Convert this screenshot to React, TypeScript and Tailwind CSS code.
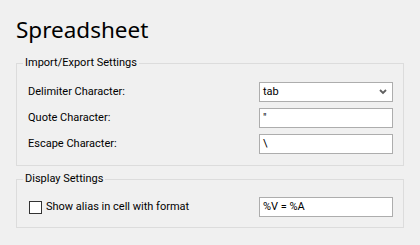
import React from "react";

function Field({ children }: { children: React.ReactNode }) {
  return (
    <div className="w-[134px] h-[20px] bg-white border border-[#adadad] flex items-center pl-[3px] text-[11px] text-black">
      {children}
    </div>
  );
}

function Row({ label, children }: { label: string; children: React.ReactNode }) {
  return (
    <div className="flex items-center justify-between h-[20px]">
      <span className="text-[11px]">{label}</span>
      {children}
    </div>
  );
}

export default function App() {
  return (
    <div className="w-[420px] h-[245px] bg-[#f0f0f0] px-[16px] text-black font-['Roboto',sans-serif]">
      <div className="pt-[15px] text-[22.5px] leading-[30px] h-[55px] font-['Noto_Sans',sans-serif]">Spreadsheet</div>

      <fieldset className="w-[388px] border border-[#dcdcdc]">
        <legend className="ml-[6px] px-[2px] text-[11px] leading-[16px]">Import/Export Settings</legend>
        <div className="pl-[11px] pr-[10px] pt-[11px] pb-[11px] flex flex-col gap-[6px]">
          <Row label="Delimiter Character:">
            <div className="w-[134px] h-[20px] bg-white border border-[#adadad] flex items-center justify-between pl-[3px] pr-[5px] text-[11px]">
              <span>tab</span>
              <svg width="8" height="6" viewBox="0 0 8 6">
                <path d="M1 1 L4 4 L7 1" fill="none" stroke="#5f5f5f" strokeWidth="1.8" />
              </svg>
            </div>
          </Row>
          <Row label="Quote Character:">
            <Field>"</Field>
          </Row>
          <Row label="Escape Character:">
            <Field>\</Field>
          </Row>
        </div>
      </fieldset>

      <fieldset className="mt-[5px] w-[388px] border border-[#dcdcdc]">
        <legend className="ml-[6px] px-[2px] text-[11px] leading-[16px]">Display Settings</legend>
        <div className="pl-[11px] pr-[10px] pt-[10px] pb-[10px]">
          <div className="flex items-center justify-between h-[20px]">
            <div className="flex items-center gap-[4px]">
              <div className="w-[13px] h-[13px] bg-white border border-[#333333] ml-[1px]" />
              <span className="text-[11px]">Show alias in cell with format</span>
            </div>
            <Field>%V = %A</Field>
          </div>
        </div>
      </fieldset>
    </div>
  );
}
